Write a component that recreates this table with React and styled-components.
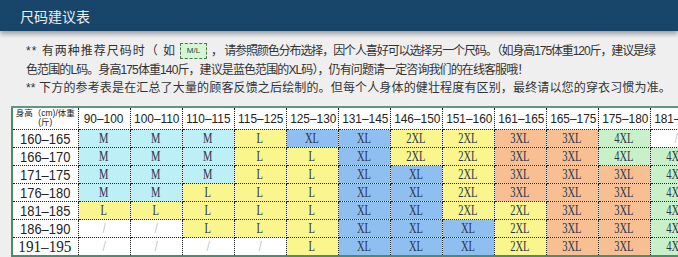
import React from "react";
import styled, { createGlobalStyle } from "styled-components";

const GlobalStyle = createGlobalStyle`
  html, body {
    margin: 0;
    padding: 0;
    background: #efefef;
  }
  body {
    font-family: "Liberation Sans", "Noto Sans CJK SC", sans-serif;
    overflow: hidden;
  }
`;

const Page = styled.div`
  width: 678px;
  height: 257px;
  overflow: hidden;
  background: #efefef;
`;

const TitleBar = styled.header`
  height: 31px;
  background: #17466a;
  display: flex;
  align-items: center;
  padding-left: 20px;
  color: #e9eef2;
  font-family: "Noto Sans CJK SC", sans-serif;
  font-size: 14px;
  box-shadow: 0 3px 5px rgba(0, 0, 0, 0.35);
`;

const Notes = styled.div`
  padding: 11px 0 0 26px;
  color: #333;
  font-size: 12px;
  line-height: 18.5px;
  white-space: nowrap;
`;

const Line = styled.div`
  display: flex;
  align-items: center;
  letter-spacing: ${({ $spacing }) => $spacing || "0"};
`;

const Part = styled.span`
  letter-spacing: ${({ $spacing }) => $spacing};
`;

const Badge = styled.span`
  display: inline-flex;
  align-items: center;
  justify-content: center;
  width: 25px;
  height: 14px;
  margin: 0 4px 0 4px;
  border: 1px dashed #4a7a4a;
  background: #d8f5d3;
  color: #2a4a2a;
  font-size: 8px;
  letter-spacing: 0;
`;

const TableWrap = styled.div`
  padding: 8px 0 0 11px;
`;

const Table = styled.table`
  width: 690px;
  border-collapse: collapse;
  table-layout: fixed;
  border-top: 2px solid #5a9a80;
  border-left: 2px solid #4a8c70;
  border-bottom: 2px solid #4a8c70;
`;

const Col = styled.col`
  width: ${({ $first }) => ($first ? "66px" : "52px")};
`;

const Value = styled.span`
  display: inline-block;
  transform: scaleX(${({ $sx }) => $sx});
`;

const HeadCell = styled.th`
  height: 21px;
  padding: 0;
  background: #fff;
  border: 1px dotted #222;
  font-weight: normal;
  font-size: ${({ $first }) => ($first ? "8.5px" : "13.5px")};
  line-height: ${({ $first }) => ($first ? "9px" : "21px")};
  color: #222;
  white-space: nowrap;
  overflow: hidden;
  text-align: center;
`;

const RowHead = styled.td`
  height: 17px;
  padding: 0;
  background: #fff;
  border: 1px dotted #222;
  text-align: center;
  font-family: ${({ $serif }) =>
    $serif ? `"Liberation Serif", serif` : `"Liberation Sans", sans-serif`};
  font-size: ${({ $serif }) => ($serif ? "16.5px" : "15px")};
  line-height: 17px;
  color: #222;
  white-space: nowrap;
`;

const palette = {
  c: "#bdeff6",
  y: "#faf58d",
  b: "#8fbff0",
  o: "#f8bf93",
  g: "#c8f1c9",
  w: "#ffffff",
};

const Cell = styled.td`
  height: 17px;
  padding: 0;
  background: ${({ $tone }) => palette[$tone]};
  border: 1px dotted #222;
  text-align: center;
  font-family: "Liberation Serif", serif;
  font-size: 15px;
  line-height: 17px;
  color: ${({ $tone }) => ($tone === "w" ? "#999" : "#2b3348")};
  white-space: nowrap;
  overflow: hidden;
`;

const weights = [
  "90–100", "100–110", "110–115", "115–125", "125–130", "131–145",
  "146–150", "151–160", "161–165", "165–175", "175–180", "181–190",
];

const rows = [
  ["160–165", "M M M L XL XL 2XL 2XL 3XL 3XL 4XL /", "c c c y b b y y o o g w"],
  ["166–170", "M M M L L XL 2XL 2XL 3XL 3XL 4XL 4XL", "c c c y y b y y o o g g"],
  ["171–175", "M M M L L XL XL 2XL 3XL 3XL 3XL 4XL", "c c c y y b b y o o o g"],
  ["176–180", "M M L L L XL XL 2XL 3XL 3XL 3XL 4XL", "c c y y y b b y o o o g"],
  ["181–185", "L L L L L XL XL 2XL 2XL 3XL 3XL 4XL", "y y y y y b b y y o o g"],
  ["186–190", "/ / L L L XL XL XL 2XL 3XL 3XL 4XL", "w w y y y b b b y o o g"],
  ["191–195", "/ / / / L XL XL XL 2XL 3XL 3XL 4XL", "w w w w y b b b y o o g"],
];

export default function App() {
  return (
    <Page>
      <GlobalStyle />
      <TitleBar>尺码建议表</TitleBar>
      <Notes>
        <Line>
          <Part $spacing="1px">** 有两种推荐尺码时（ 如</Part>
          <Badge>M/L</Badge>
          <Part $spacing="-1.1px">，  请参照颜色分布选择，因个人喜好可以选择另一个尺码。（如身高175体重120斤，建议是绿</Part>
        </Line>
        <Line $spacing="-0.9px">色范围的L码。身高175体重140斤，建议是蓝色范围的XL码），仍有问题请一定咨询我们的在线客服哦！</Line>
        <Line $spacing="0.15px">** 下方的参考表是在汇总了大量的顾客反馈之后绘制的。但每个人身体的健壮程度有区别，最终请以您的穿衣习惯为准。</Line>
      </Notes>
      <TableWrap>
        <Table>
          <colgroup>
            <Col $first />
            {weights.map((w) => (
              <Col key={w} />
            ))}
          </colgroup>
          <thead>
            <tr>
              <HeadCell $first>
                身高（cm)/体重
                <br />
                (斤)
              </HeadCell>
              {weights.map((w) => (
                <HeadCell key={w}>
                  <Value $sx={0.88}>{w}</Value>
                </HeadCell>
              ))}
            </tr>
          </thead>
          <tbody>
            {rows.map(([height, sizes, tones], i) => {
              const s = sizes.split(" ");
              const t = tones.split(" ");
              const last = i === rows.length - 1;
              return (
                <tr key={height}>
                  <RowHead $serif={last}>
                    <Value $sx={last ? 0.92 : 0.86}>{height}</Value>
                  </RowHead>
                  {s.map((v, j) => (
                    <Cell key={j} $tone={t[j]}>
                      <Value $sx={0.7}>{v}</Value>
                    </Cell>
                  ))}
                </tr>
              );
            })}
          </tbody>
        </Table>
      </TableWrap>
    </Page>
  );
}
